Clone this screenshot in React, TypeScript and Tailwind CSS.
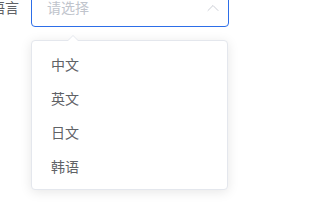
import { ChevronUp } from 'lucide-react';

const options = ['中文', '英文', '日文', '韩语'];

export default function App() {
  return (
    <div className="w-[321px] h-[216px] bg-white overflow-hidden relative font-['Noto_Sans_CJK_SC','Noto_Sans',sans-serif] text-[14px]">
      <div className="flex items-center mt-[-13px] ml-[-10px]">
        <label className="w-[41px] pr-[12px] text-right text-[#606266] leading-[40px] whitespace-nowrap">语言</label>
        <div className="relative w-[198px]">
          <div className="h-[40px] border border-[#2d6ee8] rounded-[4px] flex items-center pl-[15px] pr-[5px]">
            <span className="flex-1 text-[#c0c4cc]">请选择</span>
            <ChevronUp className="w-[20px] h-[20px] text-[#c0c4cc] mt-[1px]" strokeWidth={1} />
          </div>
          {/* dropdown */}
          <div className="absolute left-0 top-[53px] w-[197px] bg-white border border-[#e4e7ed] rounded-[4px] shadow-[0_2px_12px_0_rgba(0,0,0,0.1)] py-[6px]">
            <div className="absolute top-[-6px] left-[35px] w-0 h-0 border-x-[6px] border-x-transparent border-b-[6px] border-b-[#e4e7ed]" />
            <div className="absolute top-[-5px] left-[35px] w-0 h-0 border-x-[6px] border-x-transparent border-b-[6px] border-b-white" />
            {options.map(o => (
              <div key={o} className="h-[34px] leading-[34px] px-[19px] text-[#606266]">{o}</div>
            ))}
          </div>
        </div>
      </div>
    </div>
  );
}
